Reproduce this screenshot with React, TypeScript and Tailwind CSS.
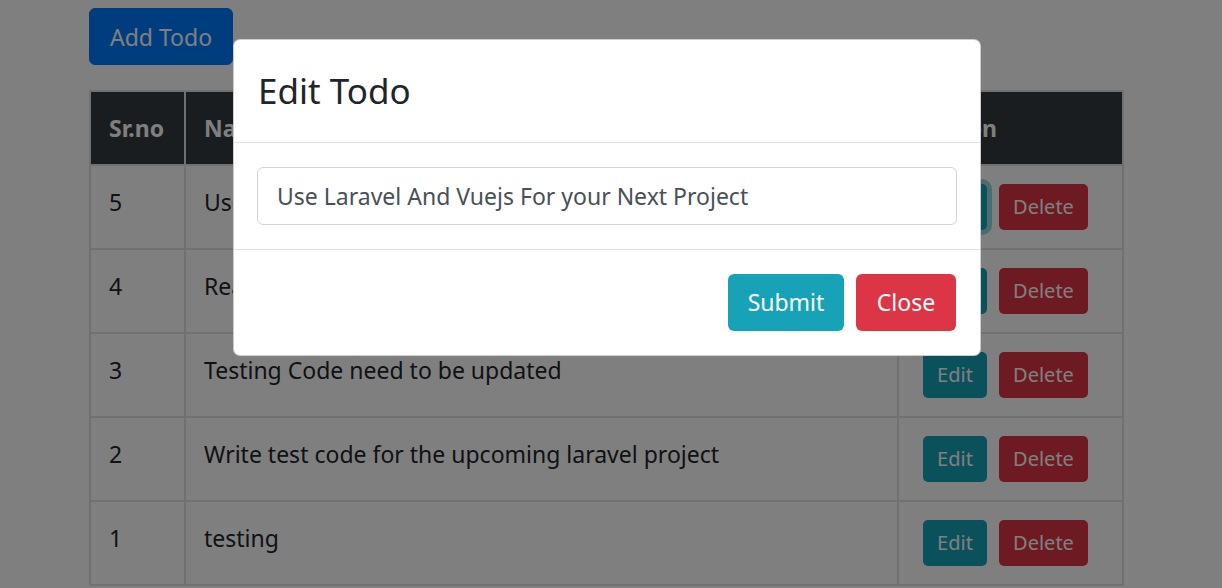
import React from "react";

const rows = [
  { id: 5, name: "Use Laravel And Vuejs For your Next Project", focus: true },
  { id: 4, name: "Read about the new features of laravel" },
  { id: 3, name: "Testing Code need to be updated" },
  { id: 2, name: "Write test code for the upcoming laravel project" },
  { id: 1, name: "testing" },
];

export default function App() {
  return (
    <div
      className="relative w-[1222px] h-[588px] overflow-hidden bg-white text-[#212529]"
      style={{ fontFamily: '"Noto Sans", "Open Sans", sans-serif' }}
    >
      <div className="ml-[89px] pt-[8px] w-[1035px]">
        <button className="h-[57px] w-[144px] rounded-[6px] bg-[#007bff] text-white text-[23px] leading-[36px] border border-[#007bff]">
          Add Todo
        </button>
        <table className="mt-[25px] w-[1035px] border-collapse border-[2px] border-[#dee2e6] table-fixed">
          <thead>
            <tr className="h-[74px] bg-[#343a40] text-white text-[23px] font-bold">
              <th className="w-[95px] text-left px-[18px] border-[2px] border-[#dee2e6]">Sr.no</th>
              <th className="w-[713px] text-left px-[18px] border-[2px] border-[#dee2e6]">Name</th>
              <th className="text-left px-[24px] border-[2px] border-[#dee2e6]">Action</th>
            </tr>
          </thead>
          <tbody>
            {rows.map((r) => (
              <tr key={r.id} className="h-[84px] text-[23px] leading-[36px]">
                <td className="align-top pt-[18px] px-[18px] border-[2px] border-[#dee2e6]">{r.id}</td>
                <td className="align-top pt-[18px] px-[18px] border-[2px] border-[#dee2e6]">{r.name}</td>
                <td className="align-top pt-[18px] px-[24px] border-[2px] border-[#dee2e6]">
                  <div className="flex gap-[12px]">
                    <button
                      className={
                        "h-[46px] w-[64px] rounded-[5px] bg-[#17a2b8] text-white text-[20px] " +
                        (r.focus ? "shadow-[0_0_0_5px_rgba(58,176,195,0.5)]" : "")
                      }
                    >
                      Edit
                    </button>
                    <button className="h-[46px] w-[89px] rounded-[5px] bg-[#dc3545] text-white text-[20px]">
                      Delete
                    </button>
                  </div>
                </td>
              </tr>
            ))}
          </tbody>
        </table>
      </div>

      <div className="absolute inset-0 bg-black/50">
        <div className="ml-[233px] mt-[39px] w-[748px] bg-white rounded-[7px] border border-black/20">
          <div className="px-[24px] py-[24px] border-b border-[#dee2e6]">
            <h5 className="text-[35px] leading-[54px] text-[#212529]">Edit Todo</h5>
          </div>
          <div className="px-[23px] py-[24px]">
            <div className="h-[58px] rounded-[6px] border border-[#ced4da] flex items-center px-[19px] text-[23px] text-[#495057]">
              Use Laravel And Vuejs For your Next Project
            </div>
          </div>
          <div className="border-t border-[#dee2e6] px-[24px] py-[24px] flex justify-end gap-[12px]">
            <button className="h-[57px] w-[116px] rounded-[6px] bg-[#17a2b8] text-white text-[23px]">
              Submit
            </button>
            <button className="h-[57px] w-[100px] rounded-[6px] bg-[#dc3545] text-white text-[23px]">
              Close
            </button>
          </div>
        </div>
      </div>
    </div>
  );
}
